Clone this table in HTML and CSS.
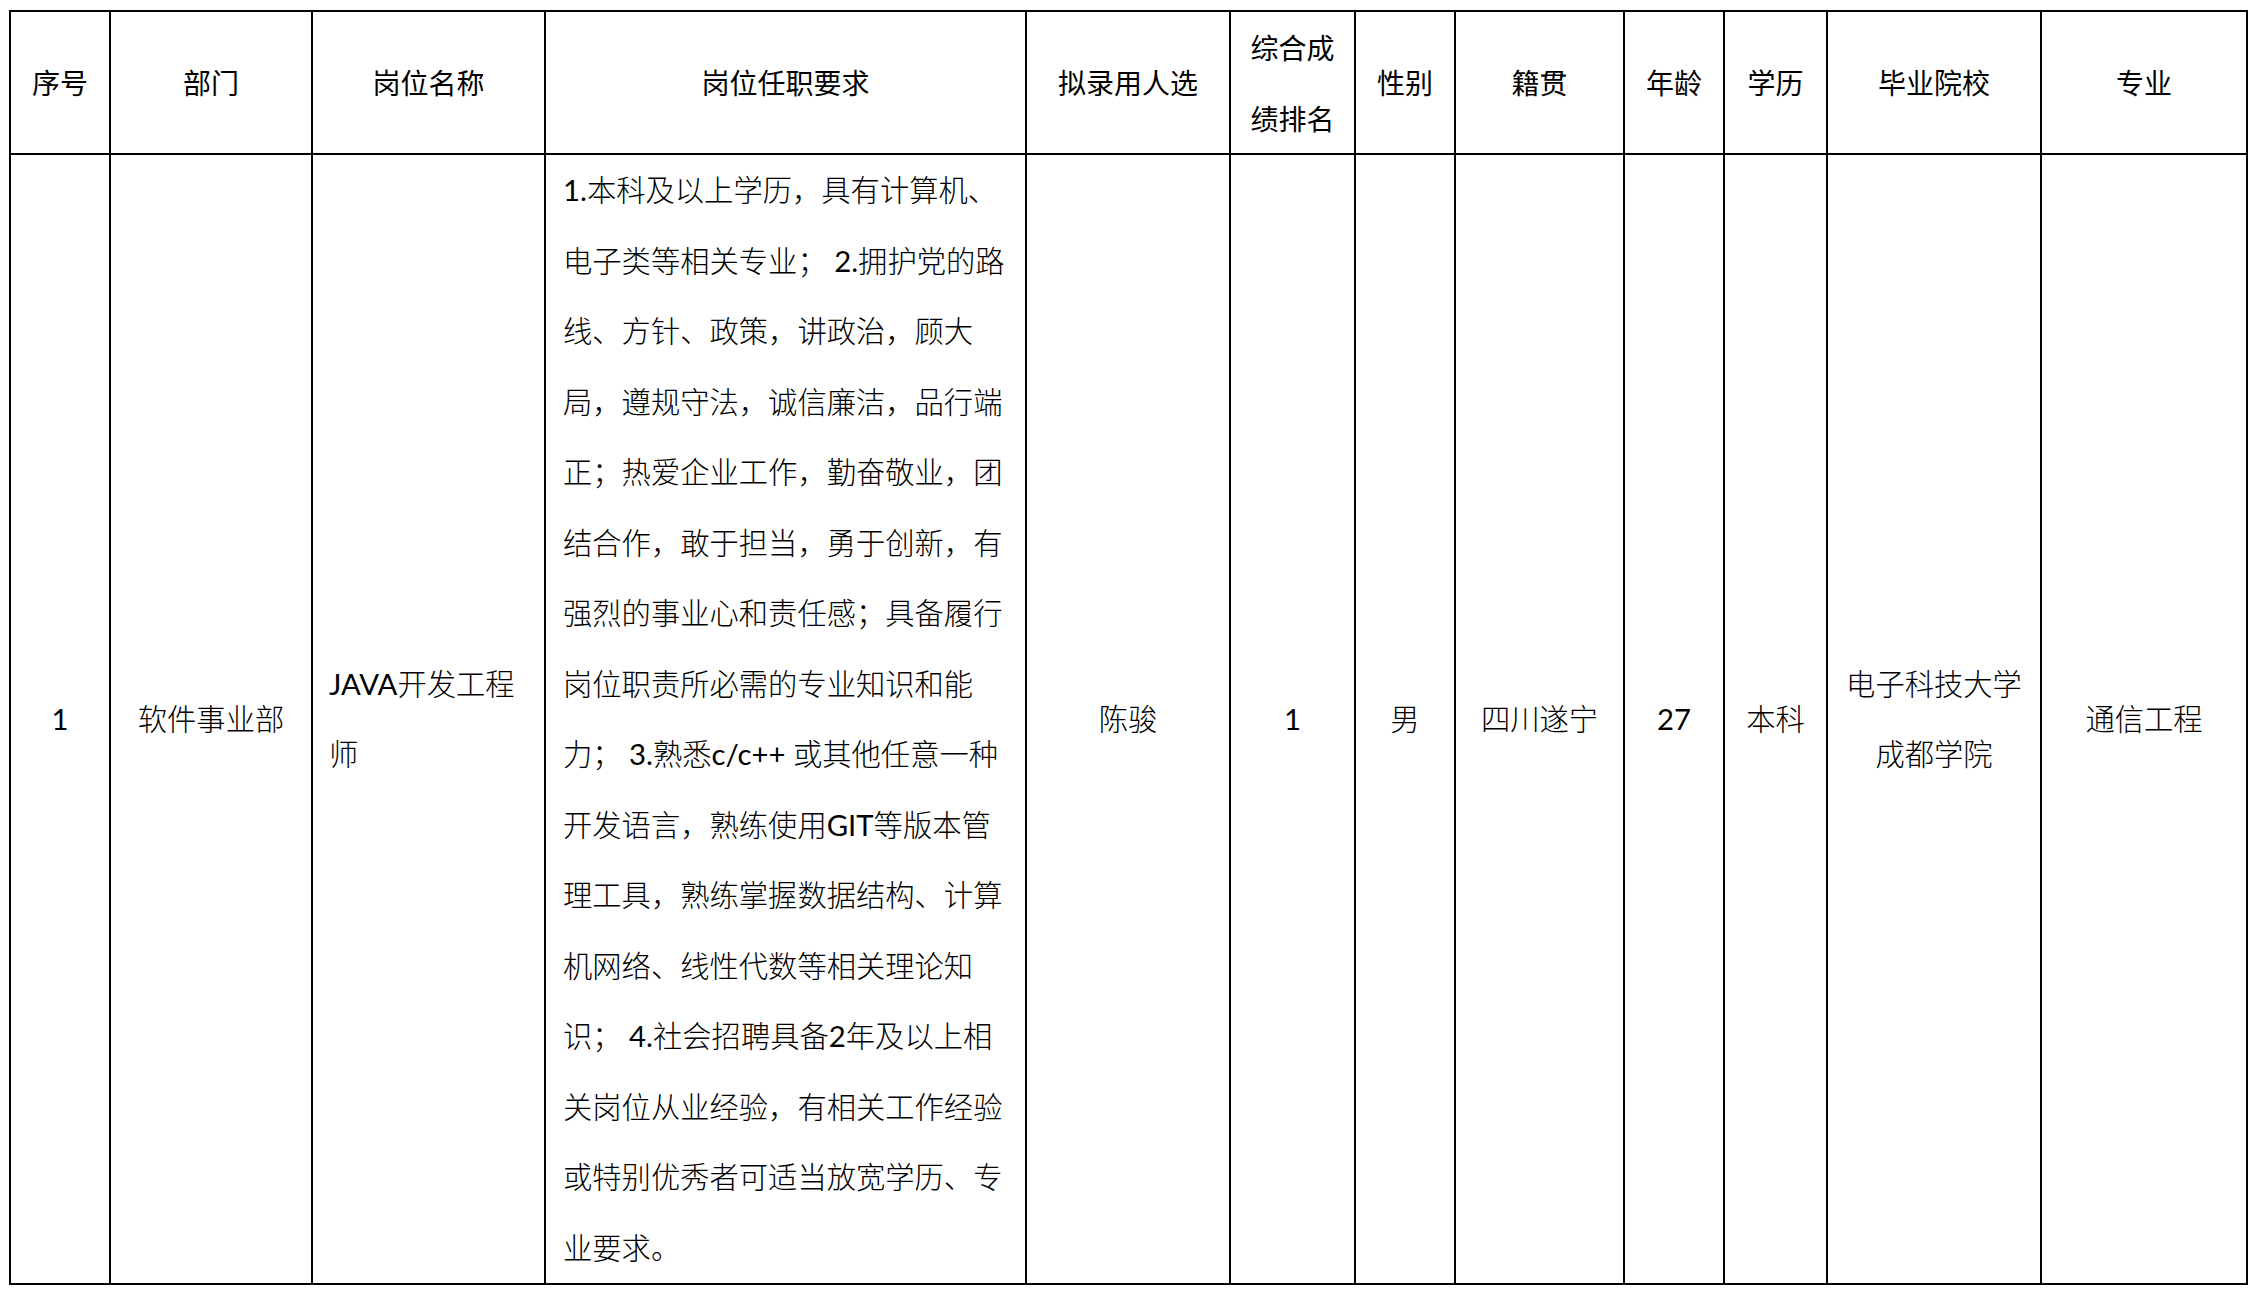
FILE: index.html
```html
<!DOCTYPE html>
<html lang="zh-CN">
<head>
<meta charset="utf-8">
<title>拟录用人员公示</title>
<link rel="stylesheet" href="styles.css">
</head>
<body>
<div class="sheet">
  <div class="cell head">序号</div>
  <div class="cell head">部门</div>
  <div class="cell head">岗位名称</div>
  <div class="cell head">岗位任职要求</div>
  <div class="cell head">拟录用人选</div>
  <div class="cell head">综合成<br>绩排名</div>
  <div class="cell head">性别</div>
  <div class="cell head">籍贯</div>
  <div class="cell head">年龄</div>
  <div class="cell head">学历</div>
  <div class="cell head">毕业院校</div>
  <div class="cell head">专业</div>

  <div class="cell body"><span class="lat">1</span></div>
  <div class="cell body">软件事业部</div>
  <div class="cell body left"><p><span class="lat">JAVA</span>开发工程<br>师</p></div>
  <div class="cell body desc"><p><span class="lat">1.</span>本科及以上学历，具有计算机、<br>电子类等相关专业；<span class="lat"> 2.</span>拥护党的路<br>线、方针、政策，讲政治，顾大<br>局，遵规守法，诚信廉洁，品行端<br>正；热爱企业工作，勤奋敬业，团<br>结合作，敢于担当，勇于创新，有<br>强烈的事业心和责任感；具备履行<br>岗位职责所必需的专业知识和能<br>力；<span class="lat"> 3.</span>熟悉<span class="lat">c/c++ </span>或其他任意一种<br>开发语言，熟练使用<span class="lat">GIT</span>等版本管<br>理工具，熟练掌握数据结构、计算<br>机网络、线性代数等相关理论知<br>识；<span class="lat"> 4.</span>社会招聘具备<span class="lat">2</span>年及以上相<br>关岗位从业经验，有相关工作经验<br>或特别优秀者可适当放宽学历、专<br>业要求。</p></div>
  <div class="cell body">陈骏</div>
  <div class="cell body"><span class="lat">1</span></div>
  <div class="cell body">男</div>
  <div class="cell body">四川遂宁</div>
  <div class="cell body"><span class="lat">27</span></div>
  <div class="cell body">本科</div>
  <div class="cell body"><p>电子科技大学<br>成都学院</p></div>
  <div class="cell body">通信工程</div>
</div>
</body>
</html>
```
FILE: styles.css
```css
html, body {
  margin: 0;
  padding: 0;
  background: #ffffff;
}

body {
  color: #000000;
  font-family: "Lato", "Noto Sans CJK SC", sans-serif;
}

.sheet {
  display: grid;
  grid-template-columns: 100px 202px 233px 481px 204px 125px 100px 169px 100px 103px 214px 206px;
  grid-template-rows: 143px 1130px;
  width: max-content;
  margin: 10px 0 0 9px;
  border-left: 2px solid #000;
  border-top: 2px solid #000;
}

.cell {
  box-sizing: border-box;
  border-right: 2px solid #000;
  border-bottom: 2px solid #000;
  display: flex;
  align-items: center;
  justify-content: center;
  text-align: center;
  line-height: 70.5px;
  white-space: nowrap;
}

.cell p {
  margin: 0;
}

.head {
  font-family: "Noto Sans CJK SC", sans-serif;
  font-size: 28px;
  font-weight: 400;
}

.body {
  font-size: 29.3px;
  font-weight: 300;
}

.lat {
  font-weight: 400;
}

.left {
  justify-content: flex-start;
  text-align: left;
  padding-left: 16px;
}

.desc {
  justify-content: flex-start;
  text-align: left;
  padding-left: 17px;
}
```
